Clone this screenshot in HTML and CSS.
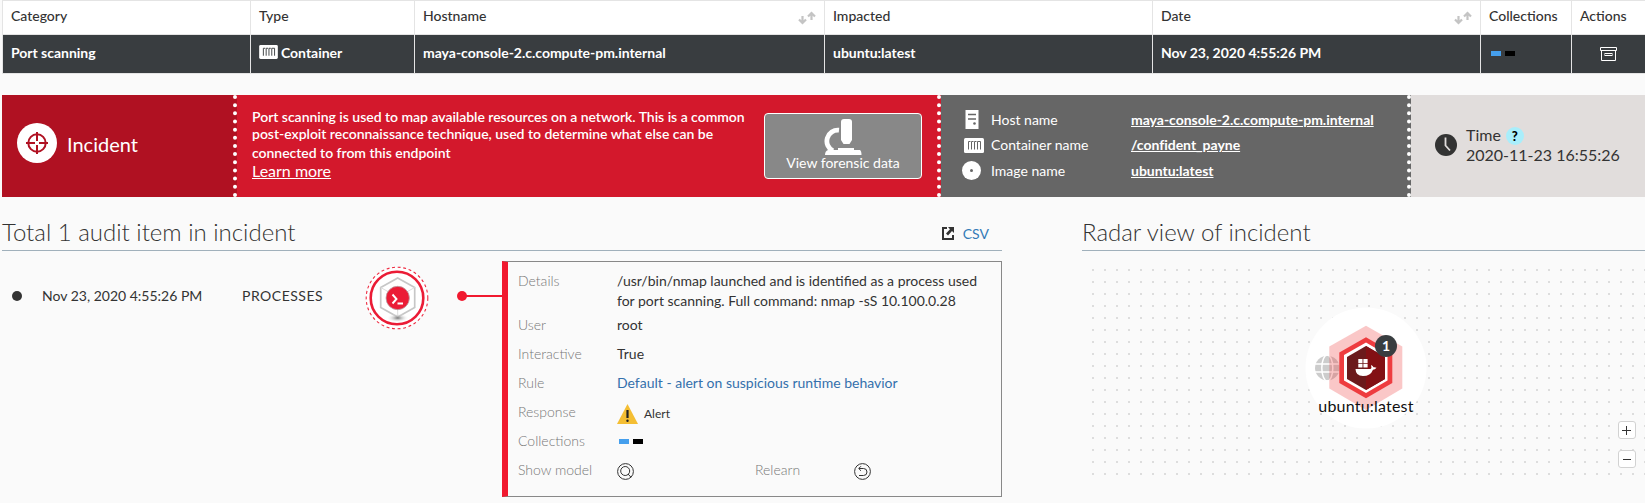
FILE: index.html
```html
<!DOCTYPE html>
<html lang="en">
<head>
<meta charset="utf-8">
<title>Incident</title>
<link rel="stylesheet" href="styles.css">
</head>
<body>
<svg class="defs" width="0" height="0">
  <symbol id="container" viewBox="0 0 20 15"><rect width="20" height="15" rx="1.500" fill="#fff"/><path d="M4.500 11.500V3.500H6.500M7.500 11.500V3.500H9.500M10.500 11.500V3.500H12.500M13.500 11.500V3.500H16.500V11.500" fill="none" stroke="currentColor" stroke-width="1"/></symbol>
  <symbol id="sort" viewBox="0 0 18 14"><path d="M4.500 5V12M1 8.500L4.500 12L8 8.500M13.500 9V2M10 5.500L13.500 2L17 5.500" fill="none" stroke="#c4c4c4" stroke-width="2.200"/></symbol>
</svg>
<div class="table">
  <div class="row head">
    <div class="cell">Category</div><div class="cell">Type</div>
    <div class="cell">Hostname<svg class="sort" width="18" height="14"><use href="#sort"/></svg></div>
    <div class="cell">Impacted</div>
    <div class="cell">Date<svg class="sort" width="18" height="14"><use href="#sort"/></svg></div>
    <div class="cell">Collections</div><div class="cell">Actions</div>
  </div>
  <div class="row data">
    <div class="cell">Port scanning</div>
    <div class="cell"><svg class="type-icon" width="19" height="14"><use href="#container"/></svg>Container</div>
    <div class="cell">maya-console-2.c.compute-pm.internal</div>
    <div class="cell">ubuntu:latest</div>
    <div class="cell">Nov 23, 2020 4:55:26 PM</div>
    <div class="cell swatches"><i class="blue"></i><i class="black"></i></div>
    <div class="cell"><svg class="archive" width="17" height="14" viewBox="0 0 17 14" fill="none" stroke="#fff" stroke-width="1"><path d="M.5.5H16.500V3.500H.5ZM1.500 3.500V13.500H15.500V3.500"/><rect x="5" y="6.500" width="7" height="2"/></svg></div>
  </div>
</div>

<div class="banner">
  <div class="incident">
    <svg width="40" height="40" viewBox="0 0 40 40"><circle cx="20" cy="20" r="20" fill="#fff"/><g fill="none" stroke="#b01122" stroke-width="2"><circle cx="20" cy="20" r="8.700"/><path d="M20 9V18M20 22V31M9 20H18M22 20H31"/></g></svg>
    <span>Incident</span>
  </div>
  <div class="about">
    <div class="about-text">
      <div class="about-lines"><span class="l1">Port scanning is used to map available resources on a network. This is a common</span><span class="l2">post-exploit reconnaissance technique, used to determine what else can be</span><span class="l3">connected to from this endpoint</span></div>
      <a class="learn">Learn more</a>
    </div>
    <div class="forensic">
      <svg width="38" height="37" viewBox="0 0 38 37" fill="#fff"><path d="M17 3Q17 0 20 0H25Q28 0 28 3V21L25.500 25H19.500L17 21V3Z"/><path d="M15 11.200A11 11 0 0 0 9 32" fill="none" stroke="#fff" stroke-width="4.800"/><path d="M14 29H30V31H36Q37.500 32 37.500 36H1Q1 32 4 31H14Z"/></svg>
      <span>View forensic data</span>
    </div>
  </div>
  <div class="source">
    <div class="src"><svg width="20" height="20" viewBox="0 0 20 20"><path d="M3.500 0H16.500V19H3.500Z" fill="#fff"/><path d="M6 4.500H14M6 9H14" stroke="#666" stroke-width="1.600"/><circle cx="12.500" cy="13.500" r="1.300" fill="#666"/></svg><span>Host name</span><a>maya-console-2.c.compute-pm.internal</a></div>
    <div class="src"><svg class="box" width="20" height="15"><use href="#container"/></svg><span>Container name</span><a>/confident_payne</a></div>
    <div class="src"><svg width="20" height="20" viewBox="0 0 20 20"><circle cx="9.500" cy="9.500" r="9.500" fill="#fff"/><circle cx="9.500" cy="9.500" r="1.500" fill="#666"/></svg><span>Image name</span><a>ubuntu:latest</a></div>
  </div>
  <div class="time">
    <svg width="22" height="22" viewBox="0 0 22 22"><circle cx="11" cy="11" r="11" fill="#333"/><path d="M10.500 3.500V11.500L15 16.500" fill="none" stroke="#e1dddc" stroke-width="1.800"/></svg>
    <div><div class="time-label">Time <b class="help">?</b></div><div class="time-value">2020-11-23 16:55:26</div></div>
  </div>
</div>

<div class="main">
  <section class="audit">
    <div class="title"><h2>Total 1 audit item in incident</h2>
      <a class="csv"><svg width="12" height="13" viewBox="0 0 12 13"><path d="M5 1H1V12H11V8" fill="none" stroke="#333" stroke-width="2"/><path d="M6 0H12V6L10 4L6 8.500L4 6.500L8 2.300Z" fill="#333"/></svg>CSV</a></div>
    <div class="event">
      <i class="bullet"></i><span class="when">Nov 23, 2020 4:55:26 PM</span><span class="kind">PROCESSES</span>
      <svg class="process" width="64" height="64" viewBox="0 0 64 64">
        <defs><radialGradient id="shade"><stop offset="0" stop-color="#777"/><stop offset="1" stop-color="#fff" stop-opacity="0"/></radialGradient></defs>
        <circle cx="32" cy="32" r="30.800" fill="#fff" stroke="#ee2a40" stroke-width="1.100" stroke-dasharray="2.900 2.700"/>
        <circle cx="32" cy="32" r="26.300" fill="#fff" stroke="#eb1c36" stroke-width="2.600"/>
        <path d="M32.700 12L49.700 21.500V41.500L32.700 51L15.700 41.500V21.500Z" fill="#fff" stroke="#c7c7c7" stroke-width="1.700"/>
        <path d="M15.700 21.500L32.700 31L49.700 21.500M32.700 31V51" fill="none" stroke="#ddd"/>
        <ellipse cx="32.700" cy="52" rx="11" ry="4.500" fill="url(#shade)"/>
        <circle cx="32.700" cy="32" r="11.700" fill="#eb1c36" stroke="#b6a6a8" stroke-width=".8"/>
        <path d="M27.500 28.500L31.500 33L27.500 37.500M32.500 37.500H38" fill="none" stroke="#fff" stroke-width="1.900"/>
      </svg>
      <svg class="link" width="50" height="10"><circle cx="5" cy="5" r="5" fill="#f1192f"/><path d="M8 5H50" stroke="#f1192f" stroke-width="2"/></svg>
      <div class="card">
        <div class="item first"><label>Details</label><div class="val"><span class="d1">/usr/bin/nmap launched and is identified as a process used</span><br><span class="d2">for port scanning. Full command: nmap -sS 10.100.0.28</span></div></div>
        <div class="item"><label>User</label><div class="val">root</div></div>
        <div class="item"><label>Interactive</label><div class="val">True</div></div>
        <div class="item"><label>Rule</label><a class="val rule">Default - alert on suspicious runtime behavior</a></div>
        <div class="item"><label>Response</label><div class="val alert"><svg width="21" height="20" viewBox="0 0 21 20"><path d="M10.500 0L21 20H0Z" fill="#f4be33"/><path d="M10.500 6V14" stroke="#222" stroke-width="2.200"/><circle cx="10.500" cy="16.700" r="1.200" fill="#222"/></svg><span>Alert</span></div></div>
        <div class="item"><label>Collections</label><div class="val swatches"><i class="blue"></i><i class="black"></i></div></div>
        <div class="item"><label>Show model</label>
          <svg class="round" width="17" height="17" viewBox="0 0 17 17" fill="none" stroke="#333"><circle cx="8.500" cy="8.500" r="7.900"/><circle cx="8.200" cy="8" r="4.500"/><path d="M11 11L14 14.200"/></svg>
          <label class="relearn">Relearn</label>
          <svg class="round" width="17" height="17" viewBox="0 0 17 17" fill="none" stroke="#333"><circle cx="8.500" cy="8.500" r="7.900"/><path d="M5 5.500H9.500A3.400 3.400 0 0 1 9.500 12.500H5M7 3.200L4.700 5.500L7 7.800"/></svg>
        </div>
      </div>
    </div>
  </section>
  <section class="radar">
    <div class="title"><h2>Radar view of incident</h2></div>
    <div class="canvas">
      <svg class="node" width="122" height="122" viewBox="1305 307 122 122">
        <circle cx="1366" cy="368" r="60.500" fill="#fff"/>
        <circle cx="1327.300" cy="368" r="12.300" fill="#ccc"/>
        <g fill="none" stroke="#fff" stroke-width="1.500"><ellipse cx="1327.300" cy="368" rx="5.500" ry="13"/><path d="M1314 364H1340M1314 372H1340"/></g>
        <path d="M1366 325.700L1402.300 346.500V388.500L1366 410L1329.300 388.500V346.500Z" fill="#f04747" fill-opacity=".3"/>
        <path d="M1366 337.300L1392.300 352.500V383L1366 398.300L1339.300 383V352.500Z" fill="#ee3c3f"/>
        <path d="M1366 342.500L1387.500 355V380.500L1366 393L1344 380.500V355Z" fill="#fff"/>
        <path d="M1366 346L1385 357V379L1366 390L1347 379V357Z" fill="#6b1a1c"/><path d="M1366 346L1385 357V379L1366 390Z" fill="#831014"/>
        <g fill="#fff"><path d="M1358.300 359h4.200v4.200h-4.200zM1363.400 359h4.200v4.200h-4.200zM1358.300 364h4.200v3.600h-4.200zM1363.400 364h4.200v3.600h-4.200zM1355.500 369H1370.500Q1372 368 1371 365Q1373 366 1373.500 367.300Q1375 367 1376.500 367.700Q1375 369.700 1373 369.700Q1370.500 376 1363 376Q1355.700 376 1355.500 369Z"/></g>
        <circle cx="1386" cy="346" r="11" fill="#393d40"/>
        <text class="badge" x="1386" y="351" text-anchor="middle">1</text>
      </svg>
      <div class="node-name"><span>ubuntu:latest</span></div>
      <div class="zoom"><svg width="18" height="18"><rect x=".5" y=".5" width="17" height="17" rx="2.500" fill="#fff" stroke="#d2d2d2"/><path d="M4 9.500H13M8.500 5V14" stroke="#333"/></svg><svg width="18" height="18"><rect x=".5" y=".5" width="17" height="17" rx="2.500" fill="#fff" stroke="#d2d2d2"/><path d="M5 9.500H13" stroke="#333"/></svg></div>
    </div>
  </section>
</div>
</body>
</html>
```

FILE: styles.css
```css
* { box-sizing: border-box; }
body { margin: 0; width: 1645px; height: 503px; overflow: hidden; background: #fafafa; color: #333; font: 14px/18px Lato, "Open Sans", sans-serif; }
svg { display: block; flex: none; }
.defs { position: absolute; }
.table { margin-left: 2px; border: 1px solid #e4e4e4; border-right: 0; height: 74px; overflow: hidden; }
.row { display: grid; grid-template-columns: 248px 164px 410px 328px 328px 91px 74px; }
.head { height: 34px; background: #fff; border-bottom: 1px solid #e4e4e4; font-weight: 500; }
.data { height: 38px; background: #393d40; color: #fff; font-weight: 700; letter-spacing: -.02px; }
.cell { display: flex; align-items: center; padding: 0 8px; border-right: 1px solid #e4e4e4; white-space: nowrap; }
.head .cell { padding-bottom: 3px; }
.data .cell { padding-bottom: 2px; }
.cell:last-child { border-right: 0; }
.sort { margin: 4px 0 0 auto; }
.type-icon { margin: -2px 3px 0 0; color: #393d40; }
.archive { margin: 2px 0 0 20px; }
.swatches { display: flex; gap: 4px; }
.swatches i { width: 10px; height: 5px; }
.val.swatches { padding-top: 2px; }
.data .cell.swatches { padding-bottom: 1px; }
.swatches .blue { background: #459fed; margin-left: 2px; }
.swatches .black { background: #000; }

.banner { display: flex; height: 102px; margin: 21px 0 0 2px; color: #fff; }
.incident { width: 235px; display: flex; align-items: center; gap: 10px; padding: 0 0 6px 15px; background: #b01122; border-right: 4px dotted #fff; font-size: 20px; }
.incident span { padding-top: 2px; }
.about { width: 704px; display: flex; padding-left: 15px; background: #d3182c; border-right: 4px dotted #fff; }
.about-text { width: 512px; padding-top: 13px; white-space: nowrap; }
.about-lines { font-weight: 600; display: flex; flex-direction: column; letter-spacing: -.025px; }
.l2 { margin-top: -1px; }
.l3 { padding-top: 1px; }
.about-lines span { width: max-content; }
.learn { display: block; width: max-content; font-size: 16px; line-height: 18px; text-decoration: underline; }
.forensic { width: 158px; height: 66px; margin-top: 18px; border: 1px solid #fff; border-radius: 4px; background: #888; display: flex; flex-direction: column; align-items: center; padding-top: 5px; }
.forensic span { line-height: 13px; }
.source { width: 470px; padding: 12px 0 0 21px; background: #666; border-right: 4px dotted #fff; }
.src { display: flex; align-items: center; height: 25.500px; color: #fff; }
.src svg { color: #666; }
.src .box { margin: 0 -2px 0 2px; }
.src span { width: 140px; margin-left: 9px; }
.src a { font-weight: 700; text-decoration: underline; letter-spacing: -.02px; }
.time { flex: 1; display: flex; align-items: flex-start; padding: 30px 0 0 24px; gap: 9px; background: #e1dddc; color: #333; font-size: 16px; line-height: 20px; }
.time > svg { margin-top: 9px; }
.time-label { display: flex; align-items: center; gap: 5px; }
.help { width: 18px; height: 18px; margin-top: 2px; border-radius: 50%; background: #a9eefb; color: #000; font: 900 13px/18px Lato, sans-serif; text-align: center; }

.main { display: flex; gap: 80px; margin: 0 0 0 2px; }
.audit { width: 1000px; }
.radar { width: 563px; }
.title { display: flex; align-items: center; justify-content: space-between; height: 54px; border-bottom: 1px solid #a0b0bb; }
h2 { margin: 17px 0 0; font-size: 24px; font-weight: 300; line-height: 30px; }
.csv { display: flex; align-items: center; gap: 9px; padding: 20px 13px 0 0; color: #337ab7; }
.event { display: flex; padding-top: 10px; white-space: nowrap; }
.bullet { width: 10px; height: 10px; margin: 30px 20px 0 10px; border-radius: 50%; background: #333; flex: none; }
.when { width: 200px; margin-top: 26px; }
.kind { width: 123px; margin-top: 26px; letter-spacing: .5px; }
.process { margin-top: 5px; }
.link { margin: 30px -1px 0 28px; width: 46px; }
.card { width: 500px; flex: none; height: 236px; border: 1px solid #888; border-left: 6px solid #f1192f; padding: 7px 0 0 10px; }
.item { display: flex; height: 29px; align-items: center; }
.item.first { height: 41px; align-items: flex-start; line-height: 20px; padding-top: 2px; }
.item label { width: 99px; color: #777; font-weight: 300; }
.rule { color: #3470ac; }
.alert { display: flex; align-items: center; gap: 6px; font-size: 12px; padding-top: 5px; }
.item .relearn { margin-left: 121px; width: 99px; }
.round { margin-top: 3px; }
.canvas { position: relative; height: 240px; }
.canvas::before { content: ""; display: block; margin: 0 0 0 10px; position: relative; top: 18px; height: 206px; background: radial-gradient(circle at 1px 1px, #ddd 1px, transparent 1.100px) 0 0 / 12px 12px; }
.node { position: absolute; left: 223px; top: 56px; }
.badge { fill: #fff; font: 700 14px Lato, sans-serif; }
.node-name { position: absolute; left: 204px; width: 160px; top: 145px; text-align: center; font-size: 16px; letter-spacing: .2px; line-height: 20px; color: #111; }
.zoom { position: absolute; left: 536px; top: 170px; display: grid; gap: 11px; }
```
